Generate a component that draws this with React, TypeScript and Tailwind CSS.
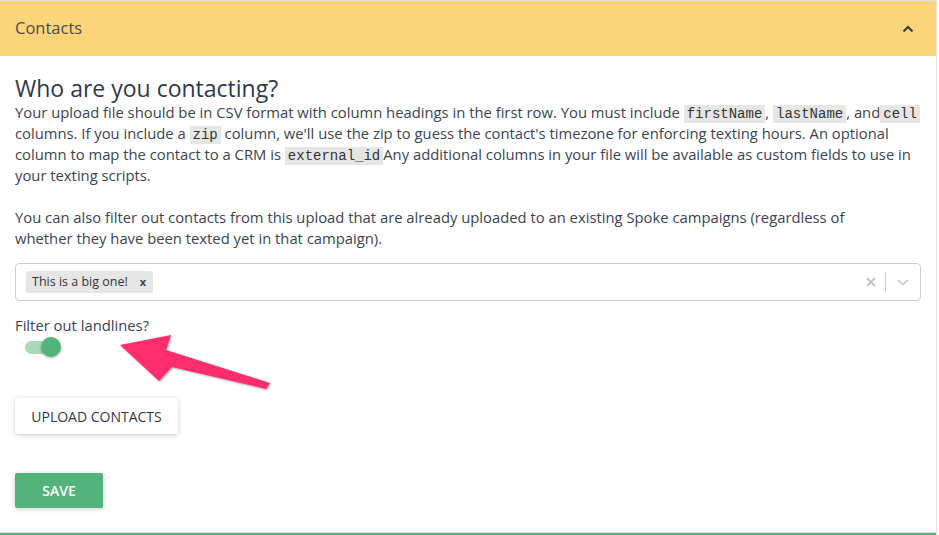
import React from 'react';

const Code = ({ children }: { children: React.ReactNode }) => (
  <code className="bg-[#e6e7e4] px-[3px] py-px align-baseline font-['Liberation_Mono',monospace] text-[14px] leading-none text-[#333]">
    {children}
  </code>
);

export default function App() {
  return (
    <div className="relative h-[535px] w-[939px] overflow-hidden bg-white font-['Open_Sans',sans-serif] text-[#3b4451]">
      <div className="flex h-full w-[937px] flex-col border-t border-r border-t-[#dcdcdc] border-r-[#e4e4e4]">
        <div className="flex h-[55px] items-center justify-between bg-[#fcd57b] pl-[15px] pr-[22px]">
          <span className="text-[16.5px] text-[#4b4b4b]">Contacts</span>
          <svg width="12" height="8" viewBox="0 0 12 8" fill="none">
            <path d="M1.5 6.5 L6 2 L10.5 6.5" stroke="#2f3b48" strokeWidth="2" />
          </svg>
        </div>

        <div className="flex flex-1 flex-col px-[15px] pt-[18px]">
          <h2 className="text-[23px] leading-[28px] text-[#2f3a47]">Who are you contacting?</h2>
          <p className="text-[14.8px] leading-[21px]">
            Your upload file should be in CSV format with column headings in the first row. You must include{' '}
            <Code>firstName</Code>, <Code>lastName</Code>, and<Code>cell</Code> columns. If you include a{' '}
            <Code>zip</Code> column, we'll use the zip to guess the contact's timezone for enforcing texting hours. An
            optional column to map the contact to a CRM is <Code>external_id</Code>Any additional columns in your file
            will be available as custom fields to use in your texting scripts.
          </p>
          <p className="mt-[21px] text-[14.8px] leading-[21px]">
            You can also filter out contacts from this upload that are already uploaded to an existing Spoke campaigns
            (regardless of
            <br />
            whether they have been texted yet in that campaign).
          </p>

          <div className="mt-[14px] flex h-[38px] w-[906px] items-center rounded-[4px] border border-[#cccccc] pl-[10px]">
            <div className="flex h-[22px] items-center rounded-[2px] bg-[#e6e6e6] pl-[6px] pr-[7px] text-[12.5px] text-[#333]">
              This is a big one!
              <span className="ml-[12px] text-[11px] font-bold text-[#444]">x</span>
            </div>
            <div className="ml-auto flex items-center">
              <svg width="12" height="12" viewBox="0 0 12 12" className="mx-[8px]">
                <path d="M2 2 L10 10 M10 2 L2 10" stroke="#c4c4c4" strokeWidth="2" />
              </svg>
              <div className="h-[20px] w-px bg-[#cccccc]" />
              <svg width="14" height="10" viewBox="0 0 14 10" className="mx-[10px]">
                <path d="M2 3 L7 7.5 L12 3" stroke="#c4c4c4" strokeWidth="1.6" fill="none" />
              </svg>
            </div>
          </div>

          <label className="mt-[14px] text-[14.8px] leading-[21px]">Filter out landlines?</label>
          <div className="relative mt-[1px] ml-[10px] h-[20px] w-[40px]">
            <div className="absolute top-[4px] left-0 h-[13px] w-[34px] rounded-full bg-[#a8d9b8]" />
            <div className="absolute top-0 left-[16px] h-[20px] w-[20px] rounded-full bg-[#52b47a] shadow-[0_1px_3px_rgba(0,0,0,0.3)]" />
          </div>

          <button className="mt-[41px] h-[36px] w-[163px] rounded-[2px] bg-white text-[14px] uppercase text-[#2f3a47] shadow-[0_1px_5px_rgba(0,0,0,0.2)]">
            Upload Contacts
          </button>

          <button className="mt-[39px] h-[35px] w-[88px] rounded-[2px] bg-[#52b47a] text-[14px] font-semibold uppercase text-white shadow-[0_1px_5px_rgba(0,0,0,0.2)]">
            Save
          </button>
        </div>

        <div className="h-[3px] border-t border-[#e0e0e0] bg-[#52b47a]" />
      </div>

      <svg
        className="absolute top-[330px] left-[110px]"
        width="170"
        height="65"
        viewBox="110 330 170 65"
        style={{ filter: 'drop-shadow(1px 1px 1px rgba(0,0,0,0.35))' }}
      >
        <polygon points="120,345 171,335 166,350 270,383 266,389 172,367 159,381" fill="#ff2d6b" />
      </svg>
    </div>
  );
}
